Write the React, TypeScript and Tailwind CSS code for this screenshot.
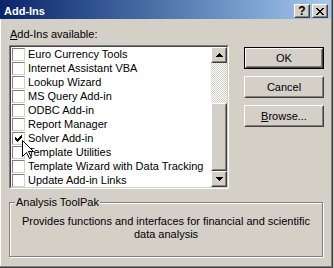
import React from 'react';

const addIns = [
  'Euro Currency Tools',
  'Internet Assistant VBA',
  'Lookup Wizard',
  'MS Query Add-in',
  'ODBC Add-in',
  'Report Manager',
  'Solver Add-in',
  'Template Utilities',
  'Template Wizard with Data Tracking',
  'Update Add-in Links',
];

// classic raised 3d box (buttons, scroll arrows)
const Raised: React.FC<{ className?: string; children?: React.ReactNode }> = ({ className = '', children }) => (
  <div className={`border border-t-white border-l-white border-b-[#404040] border-r-[#404040] ${className}`}>
    <div className="w-full h-full border border-t-[#d4d0c8] border-l-[#d4d0c8] border-b-[#808080] border-r-[#808080] flex items-center justify-center">
      {children}
    </div>
  </div>
);

const UpArrow = () => (
  <svg width="7" height="4" viewBox="0 0 7 4">
    <path d="M3 0h1v1h1v1h1v1h1v1H0V3h1V2h1V1h1z" fill="#000" />
  </svg>
);

const DownArrow = () => (
  <svg width="7" height="4" viewBox="0 0 7 4">
    <path d="M0 0h7v1H6v1H5v1H4v1H3V3H2V2H1V1H0z" fill="#000" />
  </svg>
);

const Checkbox: React.FC<{ checked?: boolean }> = ({ checked }) => (
  <div className="w-[13px] h-[13px] shrink-0 bg-white border border-t-[#808080] border-l-[#808080] border-b-[#d4d0c8] border-r-[#d4d0c8] flex items-center justify-center">
    {checked && (
      <svg width="7" height="7" viewBox="0 0 7 7">
        <path d="M0 2h1v1h1v1h1V3h1V2h1V1h1V0h1v3H6v1H5v1H4v1H3v1H2V6H1V5H0z" fill="#000" />
      </svg>
    )}
  </div>
);

export default function App() {
  return (
    <div className="w-[334px] h-[268px] bg-[#d4d0c8] overflow-hidden relative font-['Liberation_Sans',Arial,sans-serif] text-[11px] text-black">
      <div className="w-[333px] h-[268px] flex flex-col bg-[#d4d0c8] border-r border-b border-r-[#404040] border-b-[#404040]">
        <div className="flex-1 flex flex-col border-r border-b border-r-[#808080] border-b-[#808080]">
          {/* title bar */}
          <div className="h-[19px] shrink-0 flex items-start pt-[4px] pl-[4px] pr-[3px] bg-linear-to-r from-[#0a246a] to-[#a6caf0]">
            <span className="mt-[1px] leading-[13px] font-bold text-white">Add-Ins</span>
            <div className="ml-auto flex gap-[2px]">
              <Raised className="w-[16px] h-[14px] bg-[#d4d0c8]">
                <span className="font-bold text-[12px] leading-[10px]">?</span>
              </Raised>
              <Raised className="w-[16px] h-[14px] bg-[#d4d0c8]">
                <svg width="8" height="7" viewBox="0 0 8 7">
                  <path d="M0 0h2v1h1v1h2V1h1V0h2v1H7v1H6v1H5v1h1v1h1v1h1v1H6V6H5V5H3v1H2v1H0V6h1V5h1V4h1V3H2V2H1V1H0z" fill="#000" />
                </svg>
              </Raised>
            </div>
          </div>

          {/* body */}
          <div className="flex-1 flex flex-col border-l border-l-white pl-[8px] pt-[9px]">
            <div className="flex items-start">
              <div className="w-[220px]">
                <div className="ml-[1px] mb-[4px] h-[13px] leading-[13px]">
                  <span className="underline">A</span>dd-Ins available:
                </div>
                <div className="h-[144px] border border-t-[#808080] border-l-[#808080] border-b-white border-r-white">
                  <div className="w-full h-full flex border border-t-[#404040] border-l-[#404040] border-b-[#d4d0c8] border-r-[#d4d0c8] bg-white">
                    <div className="flex-1 pl-[1px]">
                      {addIns.map((name, i) => (
                        <div key={name} className="h-[14px] flex items-center">
                          <Checkbox checked={i === 6} />
                          <span className="ml-[3px] leading-[14px] whitespace-nowrap">{name}</span>
                        </div>
                      ))}
                    </div>
                    <div className="w-[16px] flex flex-col">
                      <Raised className="h-[16px] bg-[#d4d0c8]">
                        <UpArrow />
                      </Raised>
                      <div className="h-[40px] bg-[repeating-conic-gradient(#ffffff_0_25%,#d4d0c8_0_50%)] bg-[length:2px_2px]" />
                      <Raised className="h-[68px] bg-[#d4d0c8]" />
                      <Raised className="h-[16px] bg-[#d4d0c8]">
                        <DownArrow />
                      </Raised>
                    </div>
                  </div>
                </div>
              </div>

              <div className="ml-[15px] pt-[19px] flex flex-col gap-[7px]">
                <div className="w-[80px] h-[22px] border border-black">
                  <Raised className="w-full h-full bg-[#d4d0c8]">OK</Raised>
                </div>
                <Raised className="w-[80px] h-[22px] bg-[#d4d0c8]">Cancel</Raised>
                <Raised className="w-[80px] h-[22px] bg-[#d4d0c8]">
                  <span>
                    <span className="underline">B</span>rowse...
                  </span>
                </Raised>
              </div>
            </div>

            {/* description group */}
            <div className="relative mt-[13px] w-[314px] h-[55px] border border-[#808080] shadow-[inset_1px_1px_0_#ffffff,1px_1px_0_#ffffff] pt-[12px]">
              <span className="absolute -top-[7px] left-[5px] px-[1px] bg-[#d4d0c8] leading-[13px]">Analysis ToolPak</span>
              <p className="text-center leading-[13px] px-[8px]">
                Provides functions and interfaces for financial and scientific data analysis
              </p>
            </div>
          </div>
        </div>
      </div>

      {/* mouse pointer */}
      <svg className="absolute left-[22px] top-[140px]" width="13" height="20" viewBox="0 0 13 20">
        <path d="M0.5 0.5V16.5L4.5 12.5L7.5 18.5L9.5 17.5L6.5 11.5H11.5Z" fill="#fff" stroke="#000" strokeWidth="1" />
      </svg>
    </div>
  );
}
